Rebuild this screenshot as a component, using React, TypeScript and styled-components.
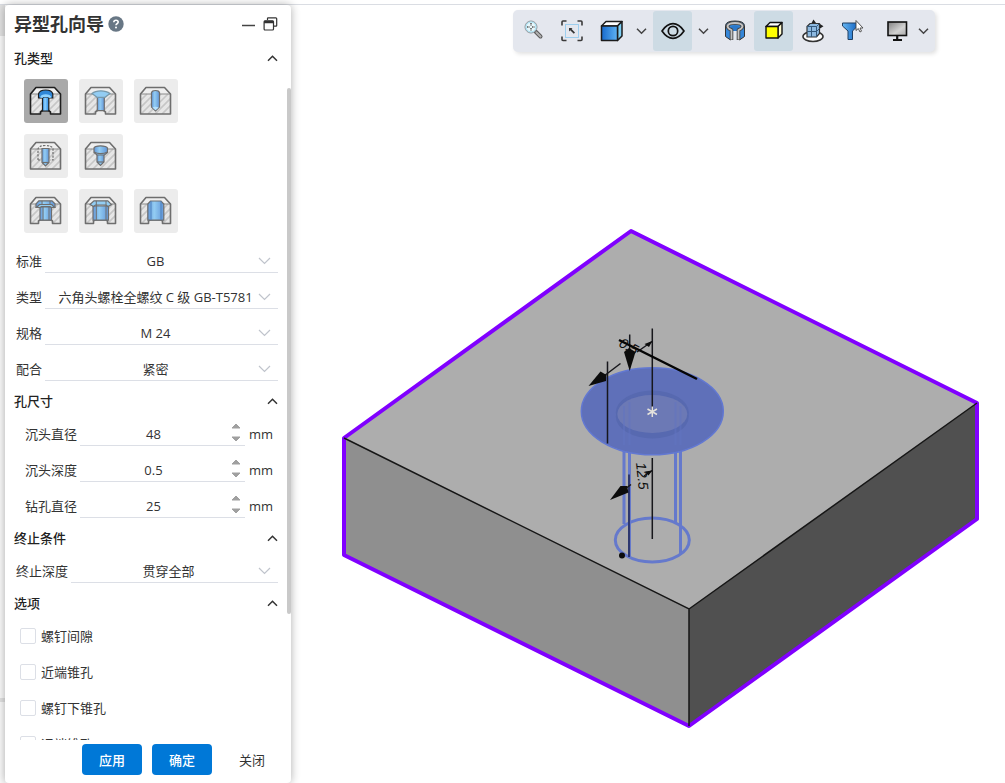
import React, { useState } from "react";
import styled, { createGlobalStyle } from "styled-components";

const GlobalStyle = createGlobalStyle`
  *, *::before, *::after { box-sizing: border-box; }
  body {
    margin: 0;
    background: #fff;
    color: #333;
    font: 13px/24px "Open Sans", "Noto Sans CJK SC", sans-serif;
  }
  button, input, select { font: inherit; color: inherit; }
`;

const Page = styled.div`
  display: flex;
  height: 100vh;
  padding-top: 4px;
`;

const Frame = styled.div`
  display: flex;
  flex: 1;
  min-width: 0;
  border-top: 1px solid #dadde3;
`;

const Gutter = styled.div`
  display: flex;
  flex-direction: column;
  justify-content: space-between;
  width: 5px;
  padding-bottom: 81px;
  background: #fafafa;
`;

const GutterMark = styled.div<{ $tall?: boolean }>`
  height: ${(p) => (p.$tall ? 31 : 4)}px;
  background: #e2e2e2;
`;

const Panel = styled.form`
  position: relative;
  display: flex;
  flex-direction: column;
  width: 286px;
  background: #fff;
  border-radius: 4px;
  box-shadow: 0 0 10px rgba(0, 0, 0, 0.32);
`;

const PanelHeader = styled.header`
  display: flex;
  align-items: center;
  gap: 4px;
  height: 40px;
  padding: 0 13px 2px 9px;
`;

const Title = styled.h1`
  margin: 0;
  font-size: 18px;
  line-height: 24px;
  font-weight: 700;
`;

const IconButton = styled.button<{ $push?: boolean }>`
  display: flex;
  margin: 0 0 0 ${(p) => (p.$push ? "auto" : "0")};
  padding: 0;
  border: 0;
  background: none;
  cursor: pointer;
`;

const Scroll = styled.div`
  display: flex;
  flex: 1;
  flex-direction: column;
  gap: 7px;
  min-height: 0;
  padding-right: 13px;
  overflow-y: auto;
  scrollbar-width: none;
`;

const ScrollThumb = styled.div`
  position: absolute;
  top: 83px;
  right: 0;
  bottom: 169px;
  width: 4px;
  border-radius: 2px;
  background: #c9c9c9;
`;

const Section = styled.section`
  display: flex;
  flex-direction: column;
  gap: 8px;
`;

const SectionToggle = styled.button`
  display: flex;
  align-items: center;
  justify-content: space-between;
  height: 26px;
  padding: 0 0 0 9px;
  border: 0;
  background: none;
  font-weight: 500;
  color: #222;
  cursor: pointer;
`;

const TileRows = styled.div`
  display: grid;
  gap: 11px;
  padding: 0 19px 8px;
`;

const TileRow = styled.div`
  display: flex;
  gap: 11px;
`;

const Tile = styled.button<{ $active?: boolean }>`
  display: flex;
  width: 44px;
  height: 44px;
  padding: 0;
  border: 0;
  border-radius: 3px;
  background: ${(p) => (p.$active ? "#a9a9a9" : "#ececec")};
  cursor: pointer;
`;

const Rows = styled.div<{ $indent: number }>`
  display: flex;
  flex-direction: column;
  gap: 12px;
  padding-left: ${(p) => p.$indent}px;
`;

const Row = styled.label`
  display: flex;
  height: 24px;
`;

const RowLabel = styled.span`
  flex: none;
  margin-right: 3px;
  white-space: nowrap;
`;

const Field = styled.span`
  position: relative;
  display: flex;
  flex: 1;
  min-width: 0;
  border-bottom: 1px solid #dcdfe6;
`;

const Select = styled.select`
  appearance: none;
  width: 100%;
  padding: 0 20px 0 8px;
  border: 0;
  outline: 0;
  background: none;
  line-height: 22px;
  text-align: center;
  text-align-last: center;
`;

const SelectArrow = styled.svg`
  position: absolute;
  top: 8px;
  right: 7px;
  pointer-events: none;
`;

const NumberInput = styled.input`
  flex: 1;
  min-width: 0;
  padding: 0;
  border: 0;
  outline: 0;
  background: none;
  text-align: center;
`;

const Spinner = styled.span`
  display: flex;
  flex-direction: column;
  gap: 7px;
  width: 18px;
  padding: 1px 4px;
`;

const Unit = styled.span`
  width: 29px;
  margin-left: 4px;
`;

const CheckRow = styled.label`
  display: flex;
  align-items: center;
  gap: 5px;
  height: 24px;
`;

const Checkbox = styled.input`
  appearance: none;
  width: 16px;
  height: 16px;
  margin: 0;
  border: 1px solid #dcdfe6;
  border-radius: 2px;
  background: #fff;

  &:checked { background: #0078d7; }
`;

const Footer = styled.footer`
  display: flex;
  justify-content: flex-end;
  gap: 10px;
  padding: 4px 9px 8px;
`;

const ActionButton = styled.button<{ $primary?: boolean }>`
  width: 60px;
  height: 31px;
  padding: 0;
  border: 0;
  border-radius: 4px;
  background: ${(p) => (p.$primary ? "#0078d7" : "transparent")};
  color: ${(p) => (p.$primary ? "#fff" : "#333")};
  font-weight: ${(p) => (p.$primary ? 500 : 400)};
  cursor: pointer;
`;

const Viewport = styled.main`
  display: flex;
  flex: 1;
  flex-direction: column;
  min-width: 0;
`;

const Toolbar = styled.div`
  display: flex;
  align-self: flex-end;
  margin: 5px 70px 0 0;
  padding: 1px 5px 1px 0;
  border-radius: 5px;
  background: #e4e7ee;
  box-shadow: 2px 2px 4px rgba(0, 0, 0, 0.12);
`;

const Tool = styled.button<{ $active?: boolean }>`
  display: flex;
  align-items: center;
  justify-content: center;
  width: 39px;
  height: 40px;
  padding: 0;
  border: 0;
  border-radius: 3px;
  background: ${(p) => (p.$active ? "#cddbe4" : "transparent")};
`;

const DisplayGroup = styled.div`
  display: flex;
  margin-left: 6px;
`;

const ToolArrow = styled(Tool)<{ $narrow?: boolean }>`
  width: ${(p) => (p.$narrow ? 14 : 23)}px;
`;

const Scene = styled.svg`
  flex: 1;
  width: 100%;
  min-height: 0;
`;

/* ---------- small glyphs ---------- */

const ChevronUp = () => (
  <svg width="11" height="11" viewBox="0 0 11 11" fill="none" stroke="#333" strokeWidth="1.5">
    <path d="M1 7.7 5.5 3.2 10 7.7" />
  </svg>
);

const ChevronDown = () => (
  <svg width="11" height="11" viewBox="0 0 11 11" fill="none" stroke="#444" strokeWidth="1.5">
    <path d="M1 2.8 5.5 7.3 10 2.8" />
  </svg>
);

const Triangle = ({ down }: { down?: boolean }) => (
  <svg width="10" height="6" viewBox="0 0 10 6" fill="#a0a0a0" stroke="#a0a0a0" strokeLinejoin="round">
    <path d={down ? "M1 1H9L5 5Z" : "M1 5H9L5 1Z"} />
  </svg>
);

/* ---------- hole type icons ---------- */

type HoleKind =
  | "counterbore" | "countersink" | "drill" | "tap" | "legacy"
  | "slotBore" | "slotSink" | "slot";

const SOLID = "M6.5 15 12 8.5H30.5L36.5 15V35H6.5Z";
const OPEN_NARROW = "M6.5 15 12 8.5H30.5L36.5 15V35H26.5V33L24.5 31.5H18.5L16.5 33V35H6.5Z";
const OPEN_WIDE = "M6.5 15 12 8.5H30.5L36.5 15V34.5H28.5V32L27 31H16L14.5 32V34.5H6.5Z";

const HoleIcon = ({ kind, active }: { kind: HoleKind; active: boolean }) => {
  const wide = kind.startsWith("slot");
  const narrow = kind === "counterbore" || kind === "countersink";
  const outline = wide ? OPEN_WIDE : narrow ? OPEN_NARROW : SOLID;
  const grad = `url(#g-${kind})`;
  const ink = active ? "#1f1f1f" : "#6e6e6e";
  const edge = active ? "#2a8ae6" : "#6296d8";
  const light = active ? "#8fd2ff" : "#93cdf3";
  return (
    <svg width="44" height="44" viewBox="0 0 44 44" fill="none" stroke={ink} strokeWidth="1.2" aria-hidden="true">
      <defs>
        <linearGradient id={`g-${kind}`}>
          <stop offset="0" stopColor={edge} />
          <stop offset="0.4" stopColor={light} />
          <stop offset="1" stopColor={edge} />
        </linearGradient>
        <clipPath id={`c-${kind}`}><path d={outline} /></clipPath>
      </defs>
      <path d={outline} fill="#efefef" stroke="none" />
      <g clipPath={`url(#c-${kind})`}>
        <path d="M6 15H37V35H6Z" fill="#e6e6e6" stroke="none" />
        <path d="M5 23 13 15M5 30 20 15M7 35 27 15M14 35 34 15M21 35 38 18M28 35 38 25" stroke="#c6c6c6" strokeWidth="1.6" />
      </g>
      <path d="M6.5 15H36.5" stroke="#8a8a8a" strokeWidth="1" />
      <path d={outline} strokeWidth="1.6" strokeLinejoin="round" />
      {kind === "counterbore" && (
        <g fill={grad}>
          <path d="M18.5 18H24.8V32H18.5Z" />
          <path d="M14.5 15Q15.5 11 21.7 11T28.8 15V19H25L24 17.5H19.5L18.5 19H14.5Z" fill="#2f86d6" />
          <path d="M16 18.5Q17 15.3 21.7 15.3T27.5 18.5L25 19 24 18H19.5L18.5 19Z" fill={light} stroke="none" />
        </g>
      )}
      {kind === "countersink" && (
        <g>
          <path d="M18.3 18H25.3V31.5H18.3Z" fill={grad} />
          <path d="M13 14.5Q16 11.8 21.8 11.8T31 14.5L26 18.3H18Z" fill={light} stroke="#7899ab" />
        </g>
      )}
      {kind === "drill" && (
        <g fill={grad}>
          <path d="M17.5 13.5Q18 11.5 21.5 11.5T25.5 13.5V28L21.5 32 17.5 28Z" />
          <path d="M18.3 28.5Q21.5 26.8 24.8 28.5L21.5 31.3Z" fill="#b4e1ff" stroke="none" />
        </g>
      )}
      {kind === "tap" && (
        <g>
          <path d="M14 26V15Q15 11.5 21.5 11.5T29 15V26H26M14 26H17" strokeDasharray="2.2 1.3" />
          <path d="M18 14.5H25V28.5L21.5 32 18 28.5Z" fill={grad} />
          <path d="M18 28.5H25" />
        </g>
      )}
      {kind === "legacy" && (
        <g fill={grad}>
          <path d="M18 20H25V28L21.5 31.5 18 28Z" />
          <path d="M15 14Q15.5 11.8 21.5 11.8T28.5 14V18.5L25.5 21H18L15 18.5Z" />
          <path d="M15 18Q18 19.6 21.7 19.6T28.5 18" fill="none" />
          <path d="M18 28H25" />
        </g>
      )}
      {kind === "slotBore" && (
        <g fill={grad}>
          <path d="M16 18H27.5V31.2H16Z" />
          <path d="M12 14.8 14.8 11.8H28L31 14.8V18.5H27.5L26 17H17.5L16 18.5H12Z" />
          <path d="M12.5 18.5 15.5 15.5H27.8L30.5 18.5H27.5L26 17.5H17.5L16 18.5Z" fill={light} />
          <path d="M19 18V31M25 18V31M18 11.8V15M26 11.8V15" strokeWidth="1" />
        </g>
      )}
      {kind === "slotSink" && (
        <g>
          <path d="M14 17H29.5V31.2H14Z" fill={grad} />
          <path d="M11 15.5 15 11.8H28.8L32.5 15.5 29 17.5 27 16H16.5L14.5 17.5Z" fill={light} />
          <path d="M17.3 11.8V31M27 11.8V31" strokeWidth="1" />
        </g>
      )}
      {kind === "slot" && (
        <g>
          <path d="M13.8 15 16.5 12H27L29.8 15V31.2H13.8Z" fill={grad} />
          <path d="M17 12V31M27 12V31" stroke="#4d80bd" strokeWidth="1" />
        </g>
      )}
    </svg>
  );
};

/* ---------- toolbar icons ---------- */

const ZoomIcon = () => (
  <svg width="24" height="24" viewBox="0 0 24 24" fill="none">
    <path d="M14.5 12.5 19.5 17.5" stroke="#555" strokeWidth="4" strokeLinecap="round" />
    <path d="M15.5 13.5 19.5 17.5" stroke="#b0b0b0" strokeWidth="2.2" strokeLinecap="round" />
    <circle cx="10" cy="8" r="6" fill="#e9f7fb" stroke="#8d9499" />
    <circle cx="10" cy="8" r="5" stroke="#9fdcf0" />
    <path d="M10 4V7M10 9V12M6 8H9M11 8H14" stroke="#555" strokeWidth="1.5" strokeDasharray="1.5 1" />
  </svg>
);

const SelectIcon = () => (
  <svg width="24" height="24" viewBox="0 0 24 24" fill="none">
    <path d="M2 6.5V3Q2 2 3 2H6.5M17.5 2H21Q22 2 22 3V6.5M22 17.5V20.5Q22 21.5 21 21.5H17.5M6.5 21.5H3Q2 21.5 2 20.5V17.5" stroke="#3a3a3a" strokeWidth="1.6" />
    <rect x="5.5" y="5.5" width="13" height="13" stroke="#56b4ee" strokeDasharray="1 1" />
    <path d="M9 9H12.5L11.5 10 15 13.5 13.8 14.7 10.2 11.2 9 12.5Z" fill="#333" />
  </svg>
);

const CubeIcon = () => (
  <svg width="24" height="24" viewBox="0 0 24 24" stroke="#1c1c1c" strokeWidth="1.5" strokeLinejoin="round">
    <defs>
      <linearGradient id="cube-front">
        <stop offset="0" stopColor="#1769cc" />
        <stop offset="1" stopColor="#5fb4f4" />
      </linearGradient>
    </defs>
    <path d="M2.5 7 7 2.5H23L18.5 7Z" fill="#fff" />
    <path d="M18.5 7 23 2.5V17L18.5 21.5Z" fill="#7fd0f5" />
    <path d="M2.5 7H18.5V21.5H2.5Z" fill="url(#cube-front)" />
  </svg>
);

const EyeIcon = () => (
  <svg width="26" height="24" viewBox="0 0 26 24" fill="none" stroke="#111" strokeWidth="1.7">
    <path d="M2 12Q7 4.7 13 4.7T24 12Q19 19.3 13 19.3T2 12Z" strokeLinejoin="round" />
    <circle cx="13" cy="12" r="4.7" />
  </svg>
);

const SectionIcon = () => (
  <svg width="24" height="24" viewBox="0 0 24 24" strokeLinejoin="round">
    <path d="M2.5 6.5Q3 2 12 2T21.5 6.5V17.5L16.5 21V11H7.5V21L2.5 17.5Z" fill="#3486d8" stroke="#333" />
    <path d="M8 8Q9 6.5 12 6.5T16 8V12H8Z" fill="#2c78c9" />
    <path d="M8.5 21V11Q4.5 9.5 4.5 7 5.5 4 12 4T19.5 7Q19.5 9.5 15.5 11V21" fill="none" stroke="#444" strokeWidth="3.6" />
    <path d="M8.5 20.5V11Q4.5 9.5 4.5 7 5.5 4 12 4T19.5 7Q19.5 9.5 15.5 11V20.5" fill="none" stroke="#c4c4c4" strokeWidth="1.8" />
  </svg>
);

const YellowCubeIcon = () => (
  <svg width="24" height="24" viewBox="0 0 24 24" stroke="#111" strokeWidth="1.4" strokeLinejoin="round">
    <path d="M4 7.5 8 3.5H20L16 7.5Z" fill="#fff" />
    <path d="M16 7.5 20 3.5V15L16 19Z" fill="#fffbd0" />
    <path d="M4 7.5H16V19H4Z" fill="#ff0" />
  </svg>
);

const RotateCubeIcon = () => (
  <svg width="24" height="26" viewBox="0 0 24 26" fill="none" stroke="#333" strokeWidth="1.2">
    <ellipse cx="12" cy="18.5" rx="10" ry="5" fill="#fff" strokeWidth="1.6" />
    <path d="M6 8.5 9 5.5H18.5V15.5L15.5 19H6Z" fill="#8db9e0" />
    <path d="M6 8.5H15.5V19M15.5 8.5 18.5 5.5M10.5 8.5V19M6 13.5H15.5L18.5 10.5" stroke="#34597c" strokeWidth="1" />
    <path d="M10.5 5 12.5 1.5 15 5ZM19 6 22.5 8.2 19 10.5Z" fill="#222" stroke="none" />
  </svg>
);

const FunnelIcon = () => (
  <svg width="24" height="24" viewBox="0 0 24 24" strokeLinejoin="round">
    <defs>
      <linearGradient id="funnel">
        <stop offset="0" stopColor="#66b7f2" />
        <stop offset="1" stopColor="#1665c2" />
      </linearGradient>
    </defs>
    <path d="M2.5 4H17.5V7L12.5 12V20.5H8V12L2.5 7Z" fill="url(#funnel)" stroke="#1f3f63" />
    <path d="M16 1.5V11.5L18.3 9.5 20 13 21.5 12.2 20 9H23Z" fill="#fff" stroke="#444" strokeWidth=".9" />
  </svg>
);

const MonitorIcon = () => (
  <svg width="24" height="24" viewBox="0 0 24 24">
    <defs>
      <linearGradient id="screen" x2="1" y2="1">
        <stop offset="0" stopColor="#808080" />
        <stop offset="0.6" stopColor="#d2d2d2" />
        <stop offset="1" stopColor="#aaa" />
      </linearGradient>
    </defs>
    <rect x="3" y="3" width="18.5" height="13.5" fill="url(#screen)" stroke="#111" strokeWidth="1.6" />
    <path d="M12.2 16.5V21M8 21H17" stroke="#111" strokeWidth="2.2" />
  </svg>
);

/* ---------- 3D preview ---------- */

const Model = () => (
  <Scene viewBox="291 52 714 731" role="img" aria-label="六角头螺栓孔预览">
    <path d="M631 231 977 403 689 609 344 438Z" fill="#adadad" />
    <path d="M344 438 689 609V726L344 555Z" fill="#8f8f8f" />
    <path d="M689 609 977 403V519L689 726Z" fill="#505050" />
    <path d="M631 231 977 403V519L689 726 344 555V438Z" fill="none" stroke="#8000ff" strokeWidth="4" strokeLinejoin="round" />
    <path d="M344 438 689 609 977 403M689 609V726" fill="none" stroke="#161616" strokeWidth="1.5" />

    <g fill="none" stroke="#6579cc" strokeWidth="3">
      <path d="M624 445V524M629.5 445V557M675.5 445V523M680.5 445V554" />
      <ellipse cx="652.3" cy="540" rx="37" ry="22" />
    </g>
    <ellipse cx="652.3" cy="411.3" rx="71" ry="43.5" fill="#5f70b9" stroke="#6278d2" strokeWidth="1.5" />
    <ellipse cx="652.3" cy="412.5" rx="36.5" ry="22" fill="#5769b0" />
    <ellipse cx="652.3" cy="416.5" rx="36.5" ry="22" fill="#5769b0" />
    <ellipse cx="652.3" cy="414" rx="35" ry="19" fill="#6c79b5" />
    <path d="M624 406V445M629.5 402V445M675.5 402V445M680.5 406V445" stroke="#6274c2" strokeWidth="2" opacity=".5" />

    <g stroke="#17171c" strokeWidth="1.5" fill="none">
      <path d="M652.3 328.5V411M652.3 458V539M607.5 361.5V443.5M629.7 334.5V355" />
      <path d="M629 474.5V557" stroke="#1b2250" />
      <path d="M600 379 620.5 363.5M625 489 631 484.5M637 352 652 341.5M644 476 652 470.5" />
      <path d="M619 340 697 379" stroke="#050505" strokeWidth="2.5" />
    </g>
    <g fill="#0c0c0c">
      <path d="M588.5 386 600.5 371.5 606.5 375 606 381Z" />
      <path d="M629.7 371 624 352 629 348 635.5 352Z" />
      <path d="M610 500 620.5 486 627 486 628.5 492.5Z" />
      <path d="M652.3 341 649 347 644.5 344Z" />
      <path d="M652.3 470.5 648.5 475.5 645 471.5Z" />
      <circle cx="622" cy="555.5" r="3" />
    </g>
    <g fill="#0c0c0c" fontFamily="Liberation Sans, sans-serif" fontStyle="italic" fontSize="14">
      <text transform="translate(618 346) rotate(28)">0.5</text>
      <text transform="translate(636 463) rotate(84)">12.5</text>
    </g>
    <path d="M652.3 406.5V417M647.5 409 657 414.5M657 409 647.5 414.5" stroke="#e5e2dc" strokeWidth="1.5" />
  </Scene>
);

/* ---------- form parts ---------- */

const Group = ({ title, children }: { title: string; children: React.ReactNode }) => {
  const [open, setOpen] = useState(true);
  return (
    <Section>
      <SectionToggle type="button" aria-expanded={open} onClick={() => setOpen(!open)}>
        {title}
        <ChevronUp />
      </SectionToggle>
      {open && children}
    </Section>
  );
};

const SelectRow = ({ label, value }: { label: string; value: string }) => (
  <Row>
    <RowLabel>{label}</RowLabel>
    <Field>
      <Select defaultValue={value}>
        <option>{value}</option>
      </Select>
      <SelectArrow width="13" height="8" viewBox="0 0 13 8" fill="none" stroke="#c0c4cc" strokeWidth="1.2">
        <path d="M1 1 6.5 6.5 12 1" />
      </SelectArrow>
    </Field>
  </Row>
);

const NumberRow = ({ label, value }: { label: string; value: string }) => (
  <Row>
    <RowLabel>{label}</RowLabel>
    <Field>
      <NumberInput inputMode="decimal" defaultValue={value} />
      <Spinner aria-hidden="true">
        <Triangle />
        <Triangle down />
      </Spinner>
    </Field>
    <Unit>mm</Unit>
  </Row>
);

const HOLE_ROWS: [HoleKind, string][][] = [
  [["counterbore", "柱形沉头孔"], ["countersink", "锥形沉头孔"], ["drill", "孔"]],
  [["tap", "螺纹孔"], ["legacy", "旧制孔"]],
  [["slotBore", "柱孔槽口"], ["slotSink", "锥孔槽口"], ["slot", "槽口"]],
];

const OPTIONS = ["螺钉间隙", "近端锥孔", "螺钉下锥孔", "远端锥孔"];

export default function App() {
  const [kind, setKind] = useState<HoleKind>("counterbore");
  return (
    <>
      <GlobalStyle />
      <Page>
        <Frame>
          <Gutter>
            <GutterMark $tall />
            <GutterMark />
          </Gutter>
          <Panel onSubmit={(e) => e.preventDefault()}>
            <PanelHeader>
              <Title>异型孔向导</Title>
              <IconButton type="button" aria-label="帮助">
                <svg width="16" height="16" viewBox="0 0 16 16">
                  <circle cx="8" cy="8" r="7.7" fill="#687785" />
                  <path d="M5.8 6.2Q5.9 4.2 8 4.2T10.2 6Q10.2 7 9 7.7 8 8.3 8 9.3" fill="none" stroke="#fff" strokeWidth="1.6" />
                  <circle cx="8" cy="11.5" r="1" fill="#fff" />
                </svg>
              </IconButton>
              <IconButton type="button" aria-label="最小化" $push>
                <svg width="16" height="14" viewBox="0 0 16 14" stroke="#444" strokeWidth="1.5">
                  <path d="M0 8.5H13" />
                </svg>
              </IconButton>
              <IconButton type="button" aria-label="还原">
                <svg width="16" height="14" viewBox="0 0 16 14" fill="none" stroke="#333" strokeWidth="1.2">
                  <path d="M5.5 3V1.5Q5.5 .8 6.2 .8H13.8Q14.7 .8 14.7 1.7V8.5Q14.7 9.200 14 9.200H11.5" />
                  <rect x="2.1" y="3.8" width="9.4" height="9.2" rx="1" fill="#fff" />
                  <path d="M2.1 5H11.5" strokeWidth="2.5" />
                </svg>
              </IconButton>
            </PanelHeader>

            <Scroll>
              <Group title="孔类型">
                <TileRows>
                  {HOLE_ROWS.map((row, i) => (
                    <TileRow key={i}>
                      {row.map(([id, name]) => (
                        <Tile key={id} type="button" aria-label={name} $active={id === kind} onClick={() => setKind(id)}>
                          <HoleIcon kind={id} active={id === kind} />
                        </Tile>
                      ))}
                    </TileRow>
                  ))}
                </TileRows>
                <Rows $indent={11}>
                  <SelectRow label="标准" value="GB" />
                  <SelectRow label="类型" value="六角头螺栓全螺纹 C 级 GB-T5781" />
                  <SelectRow label="规格" value="M 24" />
                  <SelectRow label="配合" value="紧密" />
                </Rows>
              </Group>

              <Group title="孔尺寸">
                <Rows $indent={20}>
                  <NumberRow label="沉头直径" value="48" />
                  <NumberRow label="沉头深度" value="0.5" />
                  <NumberRow label="钻孔直径" value="25" />
                </Rows>
              </Group>

              <Group title="终止条件">
                <Rows $indent={11}>
                  <SelectRow label="终止深度" value="贯穿全部" />
                </Rows>
              </Group>

              <Group title="选项">
                <Rows $indent={15}>
                  {OPTIONS.map((name) => (
                    <CheckRow key={name}>
                      <Checkbox type="checkbox" />
                      {name}
                    </CheckRow>
                  ))}
                </Rows>
              </Group>
            </Scroll>
            <ScrollThumb />

            <Footer>
              <ActionButton type="button" $primary>应用</ActionButton>
              <ActionButton type="submit" $primary>确定</ActionButton>
              <ActionButton type="button">关闭</ActionButton>
            </Footer>
          </Panel>

          <Viewport>
            <Toolbar role="toolbar" aria-label="视图">
              <Tool aria-label="局部放大"><ZoomIcon /></Tool>
              <Tool aria-label="框选"><SelectIcon /></Tool>
              <Tool aria-label="显示样式"><CubeIcon /></Tool>
              <ToolArrow aria-label="更多显示样式"><ChevronDown /></ToolArrow>
              <Tool aria-label="显示隐藏" $active><EyeIcon /></Tool>
              <ToolArrow aria-label="更多显示隐藏"><ChevronDown /></ToolArrow>
              <Tool aria-label="剖面视图"><SectionIcon /></Tool>
              <Tool aria-label="着色" $active><YellowCubeIcon /></Tool>
              <Tool aria-label="旋转视图"><RotateCubeIcon /></Tool>
              <Tool aria-label="选择过滤"><FunnelIcon /></Tool>
              <DisplayGroup>
                <Tool aria-label="屏幕"><MonitorIcon /></Tool>
                <ToolArrow aria-label="更多屏幕选项" $narrow><ChevronDown /></ToolArrow>
              </DisplayGroup>
            </Toolbar>
            <Model />
          </Viewport>
        </Frame>
      </Page>
    </>
  );
}
